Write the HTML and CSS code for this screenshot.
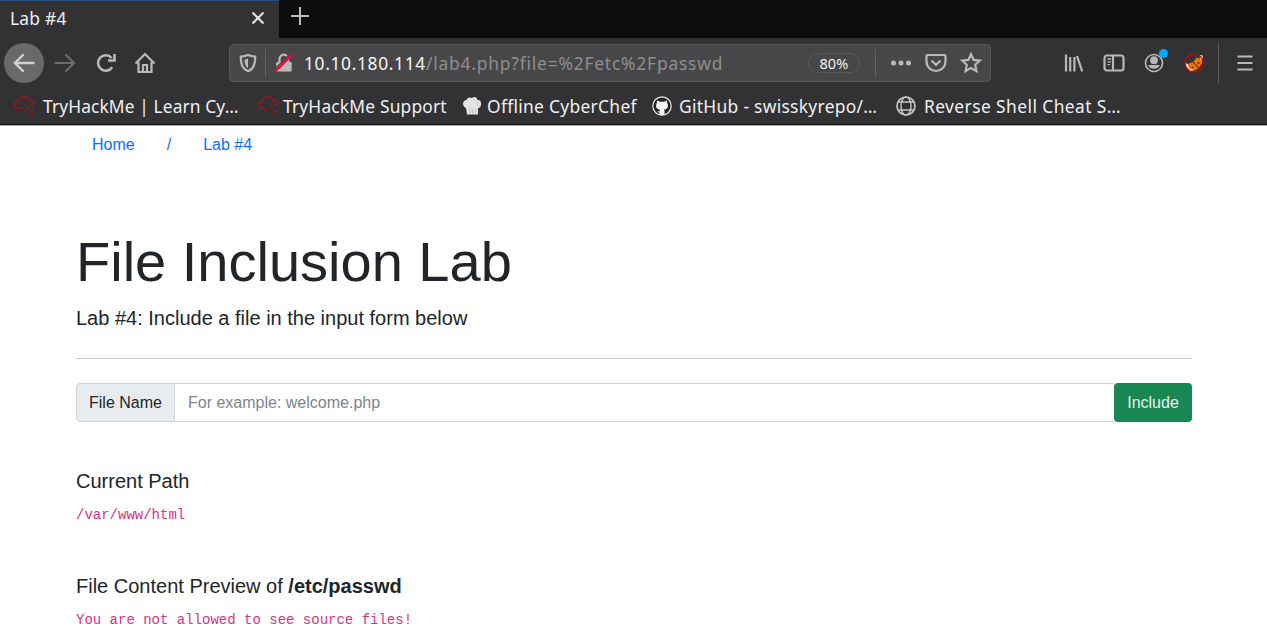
FILE: index.html
```html
<!DOCTYPE html>
<html lang="en">
<head>
<meta charset="utf-8">
<title>Lab #4</title>
<link rel="stylesheet" href="styles.css">
</head>
<body>
<svg class="defs" width="0" height="0" aria-hidden="true">
  <symbol id="thm" viewBox="0 0 22 22">
    <path d="M10 13.500H5.500C0 13.500 0 6.500 5.500 6.500C6 1 14 0 15.500 5C20 4.500 21.500 8 20 10M12 10.500h3m1.500 0h4M13.500 13.500h2.500M16.500 16.500h3.500M14 19h2.500m1.500 1h2" fill="none" stroke="#8f191d" stroke-width="1.600"/>
  </symbol>
</svg>
<header class="browser">
  <div class="tabs">
    <div class="tab">
      <span class="tab-title">Lab #4</span>
      <svg class="close" viewBox="0 0 14 14"><path d="M1.500 1.500l11 11m0-11l-11 11"/></svg>
    </div>
    <svg class="new-tab" viewBox="0 0 18 18"><path d="M9 0v18M0 9h18"/></svg>
  </div>

  <div class="nav">
    <span class="back"><svg viewBox="0 0 22 22"><path d="M20.500 11H2.500M10 3l-8 8 8 8"/></svg></span>
    <svg class="forward" viewBox="0 0 22 22"><path d="M1.500 11h18M12 3l8 8-8 8"/></svg>
    <svg class="reload" viewBox="0 0 22 22"><path d="M17.200 15.200A7.700 7.700 0 1 1 16.600 6"/><path d="M19.500 2v6.500H13"/></svg>
    <svg class="home" viewBox="0 0 22 22"><path d="M1.500 11.500L11 2l9.500 9.500M4.500 10v10h13V10M9 20v-7h4v7"/></svg>

    <div class="urlbar">
      <svg class="shield" viewBox="0 0 18 20"><path d="M9 2C6.500 3 4 3.500 1.800 3.500C1.500 11 3 16 9 18.300C15 16 16.500 11 16.200 3.500C14 3.500 11.500 3 9 2Z"/><path class="solid" d="M9 5.500v9.800C6.500 13.500 5.500 10.500 5.500 6.500C6.500 6.500 7.800 6 9 5.500Z"/></svg>
      <span class="rule"></span>
      <svg class="lock" viewBox="0 0 20 20"><path d="M5.500 10V6a4.300 4.300 0 0 1 8.600 0v4"/><path class="solid" d="M3 9h13.500a1.200 1.200 0 0 1 1.200 1.200v7A1.300 1.300 0 0 1 16.400 18.500H3.500a1.300 1.300 0 0 1-1.300-1.300V10Z"/><path class="gap" d="M0 17L17 0"/><path class="slash" d="M1.500 18L18 1.500"/></svg>
      <span class="url"><span class="host">10.10.180.114</span><span class="path">/lab4.php?file=%2Fetc%2Fpasswd</span></span>
      <span class="zoom-level">80%</span>
      <span class="rule"></span>
      <svg class="more" viewBox="0 0 22 6"><circle cx="3.500" cy="3" r="2.500"/><circle cx="11" cy="3" r="2.500"/><circle cx="18.500" cy="3" r="2.500"/></svg>
      <svg class="pocket" viewBox="0 0 22 20"><path d="M2.200 2h17.600q.7 0 .7.800V8.500a9.500 9.500 0 0 1-19 0V2.800Q1.500 2 2.200 2ZM6.500 7.500L11 12l4.500-4.500"/></svg>
      <svg class="star" viewBox="0 0 22 22"><path d="M11 2.200l2.600 5.700 6.200.7-4.600 4.200 1.300 6.300L11 16l-5.500 3.100 1.300-6.300L2.200 8.600l6.200-.7Z"/></svg>
    </div>

    <div class="tools">
      <svg class="library" viewBox="0 0 20 18"><path d="M2 .5v17M6.200 3v14.500M10.400 3v14.500M13 2l5.200 15.300"/></svg>
      <svg class="sidebar" viewBox="0 0 22 18"><rect x="1.500" y="1.500" width="19" height="15" rx="2.500"/><path d="M10 1v16"/><path class="thin" d="M4.500 5h3.500M4.500 7.800h3.500M4.500 10.600h2.500"/></svg>
      <span class="account">
        <svg viewBox="0 0 20 20"><circle class="ring" cx="10" cy="10" r="8.500"/><circle cx="10" cy="7.200" r="3.900"/><path d="M4.200 12h11.600a6.300 6.300 0 0 1-11.600 0Z"/></svg>
        <i class="dot"></i>
      </span>
      <svg class="foxy" viewBox="0 0 22 22"><path fill="#dc7917" d="M3 17L4 12l6-2 4-5 3 1 4-2-1 7-4 6-6 3-5-1Z"/><path fill="#f2dfd0" d="M1 11l3 1 2 5-3-1ZM17 3l3-1 1 6-3-1ZM5 17l5 1-2 2-3-1Z"/><circle cx="9.500" cy="16" r="1" fill="#44301d"/><circle cx="16" cy="11" r="1" fill="#44301d"/><circle cx="11" cy="11" r="10" fill="none" stroke="#b50e0e" stroke-width="1.400"/><path d="M4 4l14 14" stroke="#b50e0e" stroke-width="1.400"/></svg>
      <span class="divider"></span>
      <svg class="menu" viewBox="0 0 16 16"><path d="M.5 1.500h15M.5 8h15M.5 14.500h15"/></svg>
    </div>
  </div>

  <nav class="bookmarks">
    <a class="bm bm-learn"><svg viewBox="0 0 22 22"><use href="#thm"/></svg><span>TryHackMe | Learn Cy…</span></a>
    <a class="bm bm-support"><svg viewBox="0 0 22 22"><use href="#thm"/></svg><span>TryHackMe Support</span></a>
    <a class="bm bm-chef"><svg viewBox="0 0 20 20"><path fill="#e2e2e2" d="M4 12C0 11 0 4 4.500 4C5.500 1 8 1 10 2C12 0 15 1 15.500 4C20 3 20.500 11 16 12.500V18.500H5Z"/><path d="M8 12.500v5M10.500 12.500v5M13.200 12.500v5M15.300 5.500v4" stroke="#c6c6c6" stroke-width="1"/></svg><span>Offline CyberChef</span></a>
    <a class="bm bm-github"><svg viewBox="0 0 20 20"><circle cx="10" cy="10" r="9.200" fill="#25262b" stroke="#e8e8e8" stroke-width="1.200"/><path fill="#f5f5f5" d="M5 4.500l3 1.300h4L15 4.500l.3 3C17 11 15 13.500 12 13.500l.6 2V19H7.500v-2L5 15l2.500.5.500-2C5 13.500 3 11 4.700 7.500Z"/></svg><span>GitHub - swisskyrepo/…</span></a>
    <a class="bm bm-shell"><svg viewBox="0 0 20 20"><g fill="none" stroke="#c5c5c6" stroke-width="1.400"><circle cx="10" cy="10" r="9" stroke-width="1.700"/><ellipse cx="10" cy="10" rx="5" ry="9"/><path d="M2.500 6h15M2.500 14h15"/></g></svg><span>Reverse Shell Cheat S…</span></a>
  </nav>
</header>

<main class="page">
  <nav class="crumbs"><a>Home</a><a>/</a><a>Lab #4</a></nav>
  <h1>File Inclusion Lab</h1>
  <p class="lead">Lab #4: Include a file in the input form below</p>
  <hr>
  <form class="group">
    <label class="addon" for="file">File Name</label>
    <input id="file" type="text" placeholder="For example: welcome.php">
    <button type="button">Include</button>
  </form>
  <section class="result">
    <h5>Current Path</h5>
    <code>/var/www/html</code>
  </section>
  <section class="result">
    <h5>File Content Preview of <b>/etc/passwd</b></h5>
    <code>You are not allowed to see source files!</code>
  </section>
</main>
</body>
</html>
```
FILE: styles.css
```css
* { box-sizing: border-box; }
body {
  margin: 0;
  height: 637px;
  overflow: hidden;
  background: #fff;
  color: #212529;
  font: 16px/24px "Liberation Sans", Arial, sans-serif;
}
svg { display: block; flex: none; }
.defs { position: absolute; }

/* browser chrome */
.browser {
  height: 126px;
  background: #323234;
  color: #f0f0f1;
  font: 17.4px/24px "Noto Sans", "Open Sans", sans-serif;
  white-space: nowrap;
  border-bottom: 1px solid #b1b1b1;
}
.tabs { display: flex; height: 38px; background: #0c0c0d; }
.tab {
  display: flex;
  align-items: center;
  justify-content: space-between;
  width: 279px;
  padding: 0 14px 4px 10px;
  background: #323234;
  border-top: 1px solid #27507f;
}
.tab-title { letter-spacing: .25px; }
.close { width: 14px; height: 14px; fill: none; stroke: #e6e6e7; stroke-width: 2; }
.new-tab { width: 18px; height: 18px; margin: 7px 0 0 12px; fill: none; stroke: #bdbdbe; stroke-width: 2; }

.nav { display: flex; align-items: center; height: 49px; padding-left: 4px; }
.nav svg { fill: none; stroke: #b9b9ba; stroke-width: 2.2; }
.back {
  display: grid;
  place-items: center;
  width: 40px;
  height: 40px;
  border-radius: 50%;
  background: #69696a;
}
.nav .back svg { width: 22px; height: 22px; stroke: #d2d2d3; stroke-width: 2.400; stroke-linecap: round; }
.nav .forward { width: 22px; height: 22px; margin-left: 10px; stroke: #6b6b6d; stroke-linecap: round; }
.nav .reload { width: 22px; height: 22px; margin-left: 19px; stroke-width: 2.600; }
.nav .home { width: 22px; height: 22px; margin-left: 17px; }

.urlbar {
  display: flex;
  align-items: center;
  width: 762px;
  height: 38px;
  margin-left: 73px;
  padding: 0 8px 0 9px;
  background: #474749;
  border: 1px solid #58585b;
  border-radius: 4px;
}
.rule { width: 1px; height: 28px; background: #626268; }
.shield { width: 18px; height: 20px; margin-right: 8px; }
.nav .solid { fill: #b9b9ba; stroke: none; }
.lock { width: 20px; height: 20px; margin-left: 8px; }
.nav .gap { stroke: #474749; stroke-width: 1.500; }
.nav .slash { stroke: #e30d3d; stroke-width: 2.600; }
.url { width: 504px; margin-left: 10px; }
.host { display: inline-block; width: 122px; letter-spacing: .65px; color: #f5f5f6; }
.path { letter-spacing: .8px; color: #8e8e90; }
.zoom-level {
  width: 52px;
  height: 20px;
  margin-right: 15px;
  border: 1px solid #58585b;
  border-radius: 10px;
  color: #f0f0f1;
  font-size: 14.5px;
  line-height: 19px;
  letter-spacing: .2px;
  text-align: center;
}
.nav .more { width: 22px; height: 6px; margin-left: 14px; fill: #b9b9ba; stroke: none; }
.nav .pocket { width: 22px; height: 20px; margin-left: 13px; }
.nav .star { width: 22px; height: 22px; margin-left: 13px; }

.tools { display: flex; align-items: center; margin-left: 73px; }
.library { width: 20px; height: 18px; }
.sidebar { width: 22px; height: 18px; margin-left: 19px; }
.nav .thin { stroke-width: 1.300; }
.account { position: relative; margin-left: 19px; }
.nav .account svg { width: 20px; height: 20px; fill: #b9b9ba; stroke: none; }
.nav .account .ring { fill: none; stroke: #b9b9ba; stroke-width: 1.600; }
.dot { position: absolute; top: -4px; right: -4px; width: 9px; height: 9px; border-radius: 50%; background: #00a8f5; }
.nav .foxy { width: 20px; height: 20px; margin-left: 20px; stroke: none; }
.divider { width: 1px; height: 42px; margin-left: 14px; background: #58585b; }
.menu { width: 16px; height: 16px; margin-left: 18px; }

.bookmarks { display: flex; align-items: center; height: 38px; padding-left: 13px; border-bottom: 1px solid #0c0c0d; }
.bm { display: flex; align-items: center; }
.bm svg { width: 20px; height: 20px; margin-right: 8px; }
.bm-learn, .bm-support { width: 244px; }
.bm-learn svg, .bm-support svg { width: 22px; height: 22px; }
.bm-learn { letter-spacing: .1px; }
.bm-support { width: 205px; letter-spacing: .17px; }
.bm-support svg { margin-right: 4px; }
.bm-chef { width: 190px; letter-spacing: .3px; }
.bm-chef svg { margin-right: 5px; }
.bm-github { width: 244px; letter-spacing: .3px; }
.bm-github svg { margin-right: 7px; }
.bm-shell { letter-spacing: .42px; }

/* page */
.page { width: 1116px; margin-left: 76px; }
.crumbs { display: flex; gap: 32px; padding: 7px 16px 0; color: #0d6efd; }
h1 { margin: 71px 0 0; font-size: 56px; font-weight: 400; line-height: 67px; }
.lead { margin: 8px 0 0; font-size: 20px; line-height: 30px; }
hr { height: 1px; margin: 25px 0 24px; border: 0; background: #c7c8c9; }
.group { display: flex; height: 39px; }
.addon {
  width: 99px;
  padding: 7px 12px;
  white-space: nowrap;
  background: #e9ecef;
  border: 1px solid #ced4da;
  border-radius: 4px 0 0 4px;
}
input {
  flex: 1;
  min-width: 0;
  margin-left: -1px;
  padding: 0 13px;
  border: 1px solid #ced4da;
  border-right: 0;
  border-radius: 0;
  font: inherit;
}
input::placeholder { color: #7d858c; opacity: 1; }
button {
  width: 78px;
  padding: 0;
  border: 0;
  border-radius: 4px;
  background: #198754;
  color: #e8f3ee;
  font: inherit;
}
.result { height: 105px; padding-top: 47px; }
h5 { margin: 0 0 12px; font-size: 20px; font-weight: 400; line-height: 24px; }
code { display: block; color: #d63384; font: 14px/21px "Liberation Mono", monospace; }
```
